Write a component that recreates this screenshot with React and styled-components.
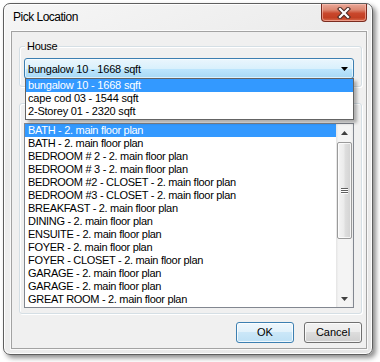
import React from 'react';
import styled, { createGlobalStyle } from 'styled-components';

const Global = createGlobalStyle`
  html, body { margin: 0; padding: 0; background: #ffffff; }
  body { font-family: "Liberation Sans", Arial, sans-serif; }
  * { box-sizing: border-box; }
`;

const Page = styled.div`
  width: 380px;
  height: 362px;
  padding: 3px 0 0 3px;
  overflow: hidden;
`;

const Window = styled.div`
  width: 370px;
  height: 352px;
  border: 1px solid #5e5e5e;
  border-radius: 7px;
  background: linear-gradient(160deg, #f6f6f6 0%, #eaeaea 35%, #efefef 55%, #e6e6e6 100%);
  box-shadow: inset 0 0 0 1px rgba(255, 255, 255, 0.9), 3px 3px 5px rgba(0, 0, 0, 0.45);
  display: flex;
  flex-direction: column;
  padding: 0 5px 5px 7px;
`;

const TitleBar = styled.div`
  height: 27px;
  display: flex;
  align-items: flex-start;
`;

const Title = styled.div`
  align-self: center;
  margin-left: 2px;
  font-family: "Liberation Sans", Arial, sans-serif;
  font-size: 12px;
  letter-spacing: -0.5px;
  color: #000;
  padding-bottom: 1px;
`;

const CloseButton = styled.div`
  margin-left: auto;
  width: 46px;
  height: 18px;
  border: 1px solid #7a2b1f;
  border-top: none;
  border-radius: 0 0 4px 4px;
  background: linear-gradient(to bottom, #e9a898 0%, #dc8670 35%, #c9472c 55%, #c23f23 80%, #d86a4c 100%);
  box-shadow: inset 0 0 0 1px rgba(255, 200, 190, 0.55);
  display: flex;
  align-items: center;
  justify-content: center;
`;

const Client = styled.div`
  flex: 1;
  border: 1px solid #a3a3a3;
  box-shadow: 0 0 0 1px rgba(255, 255, 255, 0.7);
  background: #f0f0f0;
  display: flex;
  flex-direction: column;
  padding: 0 4px 5px 7px;
`;

const GroupBox = styled.div`
  position: relative;
  margin-top: ${(p) => p.$top}px;
  height: ${(p) => p.$height}px;
  border: 1px solid #d5dfe5;
  border-radius: 3px;
  box-shadow: inset 1px 1px 0 #ffffff, 1px 1px 0 #ffffff;
  padding: ${(p) => p.$padTop}px 7px 0 4px;
`;

const GroupLabel = styled.span`
  position: absolute;
  top: -7px;
  left: 5px;
  padding: 0 2px;
  background: #f0f0f0;
  font-size: 11px;
  line-height: 13px;
  letter-spacing: -0.3px;
  color: #000;
`;

const ComboWrap = styled.div`
  position: relative;
  width: 330px;
  height: 21px;
`;

const Combo = styled.div`
  width: 100%;
  height: 100%;
  border: 1px solid #3c7fb1;
  border-radius: 3px;
  background: linear-gradient(to bottom, #eaf6fd 0%, #d9f0fc 50%, #bee6fd 50%, #a7d9f5 100%);
  box-shadow: inset 0 0 0 1px rgba(255, 255, 255, 0.6);
  display: flex;
  align-items: center;
  padding: 0 5px 0 3px;
  font-size: 11px;
  letter-spacing: -0.2px;
  color: #000;
`;

const ComboText = styled.span`
  flex: 1;
  white-space: nowrap;
`;

const Popup = styled.div`
  position: absolute;
  z-index: 5;
  top: 20px;
  left: 1px;
  right: 0;
  border: 1px solid #646464;
  background: #fff;
  padding-bottom: 1px;
  box-shadow: 3px 3px 3px rgba(0, 0, 0, 0.28);
`;

const Item = styled.div`
  height: 13px;
  line-height: 13px;
  padding-left: 2px;
  font-size: 11px;
  letter-spacing: -0.2px;
  white-space: nowrap;
  background: ${(p) => (p.$selected ? '#3399ff' : 'transparent')};
  color: ${(p) => (p.$selected ? '#ffffff' : '#000000')};
`;

const ListBox = styled.div`
  width: 330px;
  height: 185px;
  border: 1px solid #828790;
  background: #fff;
  display: flex;
`;

const Rows = styled.div`
  flex: 1;
  overflow: hidden;
`;

const Row = styled.div`
  height: 13px;
  line-height: 13px;
  padding-left: 3px;
  font-size: 11px;
  letter-spacing: -0.3px;
  white-space: nowrap;
  background: ${(p) => (p.$selected ? '#3399ff' : 'transparent')};
  color: ${(p) => (p.$selected ? '#ffffff' : '#000000')};
`;

const ScrollBar = styled.div`
  width: 17px;
  display: flex;
  flex-direction: column;
  background: linear-gradient(to right, #e4e4e4 0%, #f4f4f4 15%, #f4f4f4 85%, #ececec 100%);
`;

const ScrollButton = styled.div`
  height: 17px;
  display: flex;
  align-items: center;
  justify-content: center;
`;

const Track = styled.div`
  flex: 1;
  padding: 1px 1px 0 1px;
`;

const Thumb = styled.div`
  height: 97px;
  border: 1px solid #9a9a9a;
  border-radius: 2px;
  background: linear-gradient(to right, #f4f4f4 0%, #ebebeb 45%, #dedede 55%, #d2d2d2 100%);
  box-shadow: inset 0 0 0 1px rgba(255, 255, 255, 0.75);
  display: flex;
  flex-direction: column;
  align-items: center;
  justify-content: center;
  gap: 1px;
`;

const Grip = styled.div`
  width: 7px;
  height: 1px;
  background: #5f5f5f;
  box-shadow: 0 1px 0 #ffffff;
`;

const ButtonRow = styled.div`
  margin-top: 8px;
  height: 21px;
  display: flex;
  justify-content: flex-end;
  gap: 10px;
`;

const Button = styled.div`
  width: 58px;
  height: 21px;
  border: 1px solid ${(p) => (p.$default ? '#3c7fb1' : '#707070')};
  border-radius: 3px;
  background: ${(p) =>
    p.$default
      ? 'linear-gradient(to bottom, #eef7fd 0%, #e1f1fb 50%, #cbe7f8 50%, #bde0f5 100%)'
      : 'linear-gradient(to bottom, #f2f2f2 0%, #ebebeb 50%, #dddddd 50%, #cfcfcf 100%)'};
  box-shadow: inset 0 0 0 1px rgba(255, 255, 255, 0.75);
  display: flex;
  align-items: center;
  justify-content: center;
  font-size: 11px;
  color: #000;
  padding-bottom: 1px;
`;

const rooms = [
  'BATH - 2. main floor plan',
  'BATH - 2. main floor plan',
  'BEDROOM # 2 - 2. main floor plan',
  'BEDROOM # 3 - 2. main floor plan',
  'BEDROOM #2 - CLOSET - 2. main floor plan',
  'BEDROOM #3 - CLOSET - 2. main floor plan',
  'BREAKFAST - 2. main floor plan',
  'DINING - 2. main floor plan',
  'ENSUITE - 2. main floor plan',
  'FOYER - 2. main floor plan',
  'FOYER - CLOSET - 2. main floor plan',
  'GARAGE - 2. main floor plan',
  'GARAGE - 2. main floor plan',
  'GREAT ROOM - 2. main floor plan',
];

const houses = ['bungalow 10 - 1668 sqft', 'cape cod 03 - 1544 sqft', '2-Storey 01 - 2320 sqft'];

const Arrow = ({ up, color = '#000' }) => (
  <svg width="7" height="4" viewBox="0 0 7 4">
    {up ? <path d="M0 4 L3.5 0 L7 4 Z" fill={color} /> : <path d="M0 0 L7 0 L3.5 4 Z" fill={color} />}
  </svg>
);

export default function App() {
  return (
    <>
      <Global />
      <Page>
        <Window>
          <TitleBar>
            <Title>Pick Location</Title>
            <CloseButton>
              <svg width="14" height="12" viewBox="0 0 14 12">
                <path d="M3 2 L11 10 M11 2 L3 10" stroke="#4a2a24" strokeWidth="4.2" strokeLinecap="square" />
                <path d="M3 2 L11 10 M11 2 L3 10" stroke="#ffffff" strokeWidth="2.2" strokeLinecap="square" />
              </svg>
            </CloseButton>
          </TitleBar>
          <Client>
            <GroupBox $top={14} $height={41} $padTop={11}>
              <GroupLabel>House</GroupLabel>
              <ComboWrap>
                <Combo>
                  <ComboText>bungalow 10 - 1668 sqft</ComboText>
                  <Arrow />
                </Combo>
                <Popup>
                  {houses.map((h, i) => (
                    <Item key={h} $selected={i === 0}>
                      {h}
                    </Item>
                  ))}
                </Popup>
              </ComboWrap>
            </GroupBox>
            <GroupBox $top={16} $height={211} $padTop={19}>
              <ListBox>
                <Rows>
                  {rooms.map((r, i) => (
                    <Row key={i} $selected={i === 0}>
                      {r}
                    </Row>
                  ))}
                </Rows>
                <ScrollBar>
                  <ScrollButton>
                    <Arrow up color="#404040" />
                  </ScrollButton>
                  <Track>
                    <Thumb>
                      <Grip />
                      <Grip />
                      <Grip />
                    </Thumb>
                  </Track>
                  <ScrollButton>
                    <Arrow color="#404040" />
                  </ScrollButton>
                </ScrollBar>
              </ListBox>
            </GroupBox>
            <ButtonRow>
              <Button $default>OK</Button>
              <Button>Cancel</Button>
            </ButtonRow>
          </Client>
        </Window>
      </Page>
    </>
  );
}
